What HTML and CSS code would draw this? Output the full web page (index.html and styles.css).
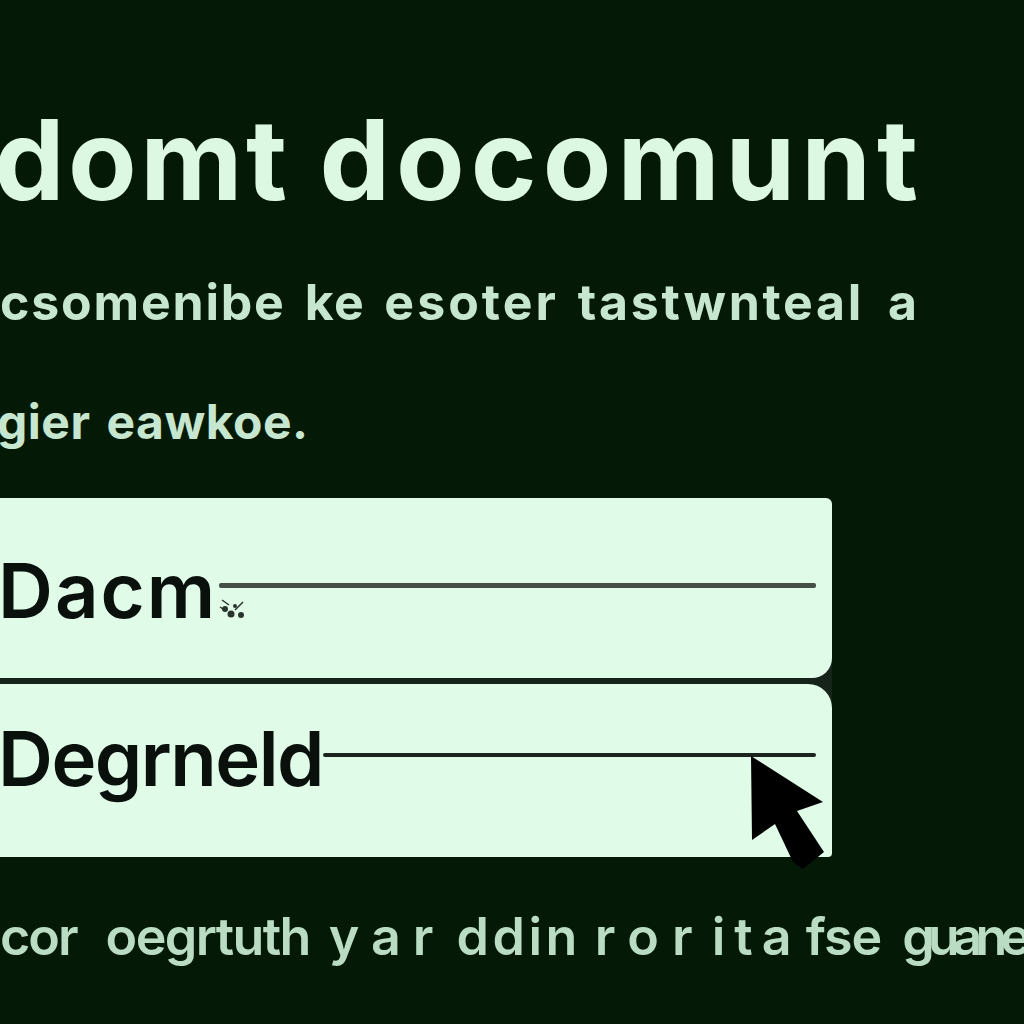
FILE: index.html
```html
<!DOCTYPE html>
<html lang="en">
<head>
<meta charset="utf-8">
<title>Document</title>
<link rel="stylesheet" href="styles.css">
</head>
<body>
<main class="page">
  <h1 class="title"><span class="t1">domt</span><span class="t2">docomunt</span></h1>
  <p class="copy copy-a"><span class="w1">csomenibe</span><span class="w2">ke</span><span class="w3">esoter</span><span class="w4">tastwnteal</span><span class="w5">a</span></p>
  <p class="copy copy-b"><span>gier</span><span>eawkoe.</span></p>
  <form class="form">
    <div class="field field-top"><span class="label label-wide">Dacm</span><span class="rule rule-grey"></span></div>
    <div class="field field-bottom"><span class="label label-tight">Degrneld</span><span class="rule rule-low"></span></div>
    <svg class="blot" viewBox="0 0 30 24" width="30" height="24" aria-hidden="true"><circle cx="8" cy="13" r="3"/><circle cx="14" cy="18" r="3.5"/><circle cx="24" cy="19" r="3"/><circle cx="18" cy="10" r="2"/><path d="M5 4 L12 9 M26 6 L18 14 M3 11 L9 15" /></svg>
    <svg class="cursor" viewBox="0 0 76 116" width="76" height="116" aria-hidden="true"><path d="M1 1 L73 47 L47 56 L74 97 L53 114 L43 107 L25 69 L2 85 Z"/></svg>
  </form>
  <p class="foot"><span class="f1">cor</span><span class="f2">oegrtuth</span><span class="f3">yar</span><span class="f4">ddin</span><span class="f5">ror</span><span class="f6">ita</span><span class="f7">fse</span><span class="f8">guane</span></p>
</main>
</body>
</html>
```
FILE: styles.css
```css
* { box-sizing: border-box; }
html, body { margin: 0; height: 100%; }
body { background: #051907; overflow: hidden; font-family: "Inter", "Liberation Sans", sans-serif; }
.page { width: 1024px; height: 1024px; display: flex; flex-direction: column; overflow: hidden; }
.title { margin: 97px 0 0 -6px; height: 124px; display: flex; gap: 29px; align-items: center; font-size: 112px; line-height: 124px; font-weight: 700; color: #dcf7e2; white-space: nowrap; }
.t1 { letter-spacing: 3.5px; }
.t2 { letter-spacing: 6px; }
.copy { margin: 0; display: flex; color: #c6e6cf; font-size: 50px; line-height: 50px; font-weight: 700; white-space: nowrap; }
.copy-a { margin-top: 56px; gap: 19px; letter-spacing: 1.5px; }
.copy-b { margin-top: 70px; gap: 16px; margin-left: -3px; font-size: 48px; letter-spacing: 0.5px; }
.w1 { letter-spacing: 1.8px; }
.w3 { letter-spacing: 3px; }
.w4 { letter-spacing: 2.7px; }
.w5 { margin-left: 5px; }
.form { position: relative; margin-top: 51px; width: 832px; display: flex; flex-direction: column; gap: 6px; background: #152318; border-radius: 0 8px 18px 0; }
.field { display: flex; align-items: flex-start; background: #e0fce9; color: #0a100b; }
.field-top { height: 180px; border-radius: 0 6px 20px 0; padding-top: 50px; }
.field-bottom { height: 173px; border-radius: 0 24px 4px 0; padding-top: 32px; }
.label { font-size: 76px; line-height: 84px; font-weight: 600; white-space: nowrap; margin-left: -2px; }
.label-wide { letter-spacing: 2px; margin-right: 2px; }
.label-tight { letter-spacing: -1.5px; }
.rule { flex: 1; height: 5px; margin: 35px 16px 0 0; background: #1c241e; border-radius: 2px; }
.rule-grey { background: #454f48; }
.rule-low { height: 4px; margin-top: 37px; }
.blot { position: absolute; left: 217px; top: 98px; }
.blot circle { fill: #2a342c; }
.blot path { stroke: #2a342c; stroke-width: 1.5; fill: none; }
.cursor { position: absolute; left: 750px; top: 257px; }
.cursor path { fill: #000; }
.foot { margin: 50px 0 0; display: flex; color: #b9dcc2; font-size: 52px; line-height: 60px; font-weight: 600; white-space: nowrap; }
.f1 { letter-spacing: -2px; }
.f2 { letter-spacing: -1.6px; margin-left: 29px; }
.f3 { letter-spacing: 12px; margin-left: 19px; }
.f4 { letter-spacing: 3.5px; margin-left: 11px; }
.f5 { letter-spacing: 13px; margin-left: 14px; }
.f6 { letter-spacing: 9px; margin-left: 6px; }
.f7 { letter-spacing: -1px; margin-left: 5px; }
.f8 { letter-spacing: -7px; margin-left: 21px; }
```
